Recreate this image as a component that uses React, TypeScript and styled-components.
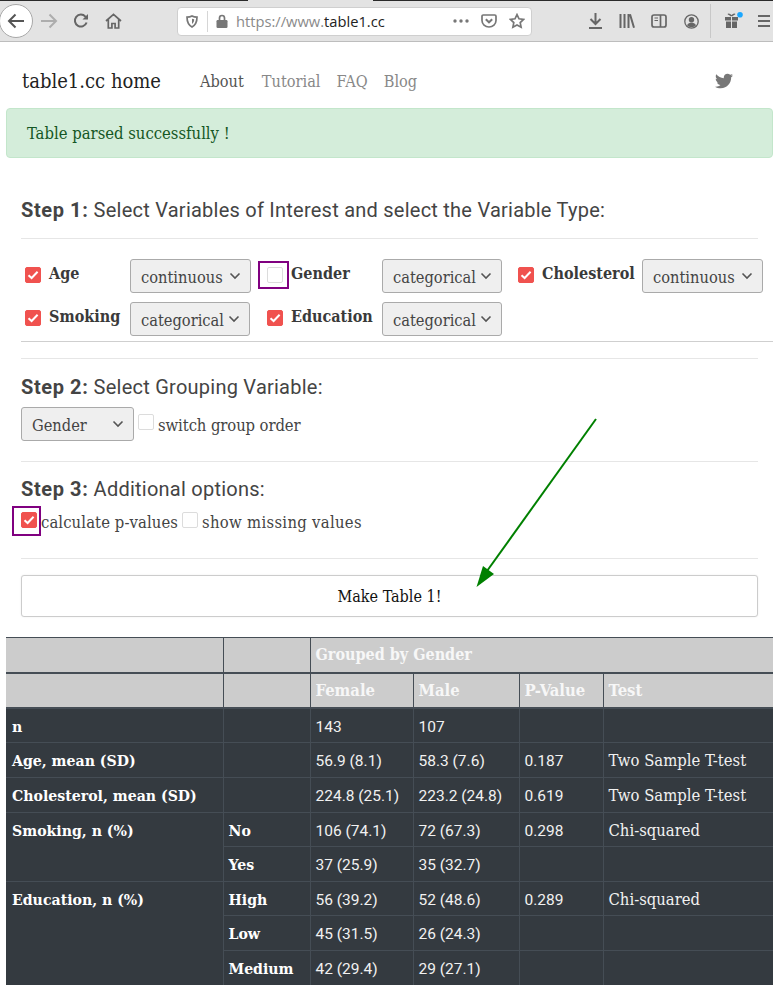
import React from "react";
import styled, { createGlobalStyle } from "styled-components";
import { FaTwitter } from "react-icons/fa";

const slab = '"DejaVu Serif Condensed", "DejaVu Serif", serif';
const heading = 'Roboto, "Open Sans", sans-serif';

const Global = createGlobalStyle`
  html, body { margin: 0; padding: 0; background: #fff; }
  * { box-sizing: border-box; }
  body { font-family: ${slab}; font-size: 16.5px; color: #444; overflow-x: hidden; }
`;

const Page = styled.div`
  position: relative;
  width: 773px;
  height: 985px;
  overflow: hidden;
`;

/* browser chrome */
const TabEdge = styled.div`
  height: 1px;
  background: linear-gradient(to right, #2a2a2a 248px, #e3e3e3 248px, #e3e3e3 373px, #2a2a2a 373px);
`;
const Toolbar = styled.div`
  display: flex;
  align-items: center;
  height: 41px;
  background: #e3e3e3;
  border-bottom: 1px solid #bdbdbd;
`;
const BackButton = styled.div`
  flex: none;
  display: flex;
  align-items: center;
  justify-content: center;
  width: 34px;
  height: 34px;
  margin-left: -1px;
  border: 1px solid #a8a8a8;
  border-radius: 50%;
  background: #fff;
`;
const Slot = styled.div<{ $dim?: boolean }>`
  flex: none;
  display: flex;
  align-items: center;
  justify-content: center;
  width: 32px;
  height: 32px;
  color: ${(p) => (p.$dim ? "#adadad" : "#666")};
`;
const UrlBar = styled.div`
  flex: none;
  display: flex;
  align-items: center;
  width: 355px;
  height: 29px;
  margin: 0 47px 0 48px;
  padding: 0 6px 0 8px;
  background: #fff;
  border: 1px solid #cfcfcf;
  border-radius: 4px;
  color: #777;
`;
const UrlDivider = styled.div`
  width: 1px;
  height: 21px;
  margin: 0 8px 0 9px;
  background: #d6d6d6;
`;
const UrlText = styled.div`
  flex: 1;
  margin-left: 8px;
  font-family: "Open Sans", sans-serif;
  font-size: 14.7px;
  color: #8a8a8a;
  white-space: nowrap;
  b {
    font-weight: 400;
    color: #222;
  }
`;
const UrlIcons = styled.div`
  display: flex;
  align-items: center;
  gap: 12px;
`;
const ToolDivider = styled.div`
  flex: none;
  width: 1px;
  height: 34px;
  margin: 0 5px 0 3px;
  background: #c8c8c8;
`;

/* site */
const Nav = styled.nav`
  display: flex;
  align-items: center;
  height: 66px;
  padding: 12px 0 0 22px;
`;
const Brand = styled.div`
  width: 178px;
  font-size: 20px;
  color: #222;
  white-space: nowrap;
`;
const NavLink = styled.a<{ $active?: boolean }>`
  margin-right: ${(p) => (p.$active ? 18 : 16)}px;
  font-size: 16.2px;
  color: ${(p) => (p.$active ? "#555" : "#888")};
  white-space: nowrap;
`;
const TwitterLink = styled.a`
  display: flex;
  margin-left: 282px;
  color: #777;
  font-size: 18px;
`;
const Alert = styled.div`
  display: flex;
  align-items: center;
  height: 50px;
  margin-left: 6px;
  padding: 1px 0 0 20px;
  background: #d4edda;
  border: 1px solid #c3e6cb;
  border-radius: 4px;
  color: #155724;
`;
const Main = styled.div`
  padding: 40px 15px 0 21px;
`;
const StepTitle = styled.h3`
  margin: 0;
  font-family: ${heading};
  font-size: 20px;
  line-height: 24px;
  font-weight: 400;
  letter-spacing: 0.24px;
  color: #444;
  white-space: nowrap;
  b {
    font-weight: 700;
    letter-spacing: 0.6px;
  }
`;
const Rule = styled.hr<{ $top: number; $bottom: number }>`
  height: 1px;
  margin: ${(p) => p.$top}px 0 ${(p) => p.$bottom}px;
  border: 0;
  background: #e6e6e6;
`;
const FullRule = styled.hr`
  width: 752px;
  height: 1px;
  margin: 5px 0 16px;
  border: 0;
  background: #cfcfcf;
`;
const Variables = styled.div`
  display: grid;
  grid-template-columns: 105px 137px 115px 136px 124px 121px;
  row-gap: 9px;
  padding-left: 4px;
`;
const Field = styled.label`
  display: flex;
  align-items: flex-start;
  gap: 8px;
  padding-top: 8px;
`;
const FieldName = styled.span`
  margin-top: -7px;
  font-size: 16px;
  font-weight: 700;
  line-height: 28px;
  color: #3a3a3a;
  white-space: nowrap;
`;
const Box = styled.span<{ $on?: boolean }>`
  position: relative;
  flex: none;
  display: flex;
  align-items: center;
  justify-content: center;
  width: 16px;
  height: 16px;
  border-radius: 2px;
  border: 1px solid ${(p) => (p.$on ? "#f0524f" : "#dcdcdc")};
  background: ${(p) => (p.$on ? "#f0524f" : "#fff")};
`;
const Mark = styled.span<{ $right: number; $bottom: number }>`
  position: absolute;
  top: -7px;
  left: -10px;
  right: ${(p) => -p.$right}px;
  bottom: ${(p) => -p.$bottom}px;
  border: 2px solid #800080;
`;
const Select = styled.select<{ $w: number }>`
  appearance: none;
  width: ${(p) => p.$w}px;
  height: 34px;
  padding: 2px 0 0 10px;
  font-family: ${slab};
  font-size: 16.3px;
  color: #444;
  border: 1px solid #aaa;
  border-radius: 3px;
  background-color: #efefef;
  background-image: url("data:image/svg+xml,%3Csvg xmlns='http://www.w3.org/2000/svg' width='12' height='8'%3E%3Cpath d='M1.5 1.5 6 6l4.5-4.5' fill='none' stroke='%23555' stroke-width='1.6'/%3E%3C/svg%3E");
  background-repeat: no-repeat;
  background-position: right 9px center;
`;
const GroupRow = styled.div`
  display: flex;
  align-items: flex-start;
  margin-top: 8px;
`;
const Inline = styled.label<{ $gap: number; $left: number; $track: number }>`
  display: flex;
  align-items: center;
  gap: ${(p) => p.$gap}px;
  height: 34px;
  margin-left: ${(p) => p.$left}px;
  color: #444;
  letter-spacing: ${(p) => p.$track}px;
  white-space: nowrap;
  ${Box} {
    margin-top: -4px;
  }
`;
const GroupInline = styled(Inline)`
  padding-top: 2px;
  ${Box} {
    margin-top: -6px;
  }
`;
const Options = styled.div`
  display: flex;
  align-items: center;
  height: 24px;
  margin-top: 9px;
  ${Inline} {
    height: 24px;
  }
`;
const MakeButton = styled.button`
  display: block;
  width: 100%;
  height: 42px;
  margin-bottom: 20px;
  background: #fff;
  border: 1px solid #ccc;
  border-radius: 3px;
  box-shadow: 0 0 2px rgba(0, 0, 0, 0.08);
  font-family: ${slab};
  font-size: 16px;
  color: #111;
`;
const Arrow = styled.svg`
  position: absolute;
  left: 470px;
  top: 415px;
`;

/* result table */
const Table = styled.table`
  width: 767px;
  margin-left: 6px;
  border-collapse: collapse;
  table-layout: fixed;
  font-size: 16.5px;
  white-space: nowrap;
`;
const Row = styled.tr<{ $h: number }>`
  height: ${(p) => p.$h}px;
`;
const Th = styled.th<{ $edge?: boolean; $small?: boolean }>`
  padding: 0 5px;
  text-align: left;
  font-size: ${(p) => (p.$small ? 16 : 16.5)}px;
  font-weight: 700;
  color: #f7f7f7;
  background: #cccccc;
  border: 1px solid #454d55;
  border-bottom-width: 2px;
  ${(p) => p.$edge && "border-left: 0;"}
`;
const Td = styled.td<{ $num?: boolean }>`
  padding: 6px 5px 3px;
  vertical-align: top;
  line-height: 24px;
  font-family: ${(p) => (p.$num ? '"Roboto", sans-serif' : "inherit")};
  font-size: ${(p) => (p.$num ? 15.5 : 16.5)}px;
  color: #f1f1f1;
  background: #343a40;
  border: 1px solid #454d55;
`;
const RowHead = styled(Td)<{ $edge?: boolean }>`
  font-size: 15.7px;
  font-weight: 700;
  color: #fff;
  ${(p) => p.$edge && "border-left: 0; padding-left: 6px;"}
`;

const stroke = { fill: "none", stroke: "currentColor", strokeWidth: 1.7 };

const Check = () => (
  <svg width="12" height="10" viewBox="0 0 12 10">
    <path d="M1.5 5.2 4.6 8l6-6.2" fill="none" stroke="#fff" strokeWidth="2" />
  </svg>
);

const Checkbox = ({ on, children }: { on?: boolean; children?: React.ReactNode }) => (
  <Box $on={on}>
    {on && <Check />}
    {children}
  </Box>
);

const kinds = ["continuous", "categorical"];
const VarSelect = ({ value, w }: { value: string; w: number }) => (
  <Select $w={w} defaultValue={value}>
    {kinds.map((k) => (
      <option key={k}>{k}</option>
    ))}
  </Select>
);

const vars = [
  { name: "Age", on: true, kind: "continuous", w: 121 },
  { name: "Gender", on: false, kind: "categorical", w: 120, marked: true },
  { name: "Cholesterol", on: true, kind: "continuous", w: 121 },
  { name: "Smoking", on: true, kind: "categorical", w: 120 },
  { name: "Education", on: true, kind: "categorical", w: 120 },
];

const Chrome = () => (
  <>
    <TabEdge />
    <Toolbar>
      <BackButton>
        <svg width="18" height="16" viewBox="0 0 18 16" color="#555" {...stroke} strokeWidth={2}>
          <path d="M17 8H2M8.5 1.5 2 8l6.5 6.5" />
        </svg>
      </BackButton>
      <Slot $dim>
        <svg width="18" height="16" viewBox="0 0 18 16" {...stroke} strokeWidth={2}>
          <path d="M1 8h15M9.5 1.5 16 8l-6.5 6.5" />
        </svg>
      </Slot>
      <Slot>
        <svg width="16" height="16" viewBox="0 0 16 16" {...stroke} strokeWidth={2}>
          <path d="M13.6 9.5A6 6 0 1 1 12.4 3.6L14.5 5.5" />
          <path d="M15 1v5.5H9.5" fill="currentColor" stroke="none" />
        </svg>
      </Slot>
      <Slot>
        <svg width="17" height="16" viewBox="0 0 17 16" {...stroke}>
          <path d="M1 8 8.5 1.3 16 8M3.3 6.5V15h3.6v-4.5h3.2V15h3.6V6.5" />
        </svg>
      </Slot>
      <UrlBar>
        <svg width="12" height="13" viewBox="0 0 12 13" {...stroke}>
          <path d="M6 1c1.700.9 3.300 1.100 5 1.100 0 4.600-1.300 8-5 9.900C2.300 10.100 1 6.700 1 2.100 2.700 2.100 4.300 1.900 6 1Z" />
          <path d="M6 3.800c.7.300 1.300.4 2.200.4 0 2-.7 3.700-2.200 4.700Z" fill="currentColor" stroke="none" />
        </svg>
        <UrlDivider />
        <svg width="12" height="14" viewBox="0 0 12 14">
          <path d="M3.500 6V4a2.500 2.500 0 0 1 5 0v2" fill="none" stroke="currentColor" strokeWidth="1.700" />
          <rect x="0.500" y="6" width="11" height="8" rx="1.200" fill="currentColor" />
        </svg>
        <UrlText>
          https://www.<b>table1.cc</b>
        </UrlText>
        <UrlIcons>
          <svg width="16" height="4" viewBox="0 0 16 4" fill="currentColor">
            <circle cx="2" cy="2" r="1.700" />
            <circle cx="8" cy="2" r="1.700" />
            <circle cx="14" cy="2" r="1.700" />
          </svg>
          <svg width="16" height="14" viewBox="0 0 16 14" {...stroke}>
            <path d="M1 2.200C1 1.500 1.500 1 2.200 1h11.600c.7 0 1.200.5 1.200 1.200V6.500a7 6.500 0 0 1-14 0Z" />
            <path d="m4.800 5.300 3.200 3 3.200-3" strokeWidth="2" />
          </svg>
          <svg width="16" height="16" viewBox="0 0 16 16" {...stroke}>
            <path d="m8 1.600 2 4.200 4.600.6-3.400 3.200.9 4.600L8 11.900l-4.100 2.300.9-4.600L1.400 6.400 6 5.800Z" />
          </svg>
        </UrlIcons>
      </UrlBar>
      <Slot>
        <svg width="13" height="16" viewBox="0 0 13 16" {...stroke} strokeWidth={2}>
          <path d="M6.500 0v10.500M1.500 6l5 5 5-5M0 15h13" />
        </svg>
      </Slot>
      <Slot>
        <svg width="16" height="14" viewBox="0 0 16 14" {...stroke} strokeWidth={2}>
          <path d="M1.500 0v14M5.500 0v14M9.500 0v14M11 .3 15 13.700" />
        </svg>
      </Slot>
      <Slot>
        <svg width="16" height="14" viewBox="0 0 16 14" {...stroke}>
          <rect x="1" y="1" width="14" height="12" rx="2" />
          <path d="M9.500 1v12" />
          <path d="M3.500 4H7M3.500 6.500H7" strokeWidth="1.200" />
        </svg>
      </Slot>
      <Slot>
        <svg width="15" height="15" viewBox="0 0 15 15" {...stroke} strokeWidth={1.300}>
          <circle cx="7.500" cy="7.500" r="6.700" />
          <circle cx="7.500" cy="5.800" r="2.700" fill="currentColor" stroke="none" />
          <path d="M3 11.200c1-2 2.700-2.500 4.500-2.500s3.500.5 4.500 2.500c-1 1.300-2.600 2-4.500 2s-3.500-.7-4.500-2Z" fill="currentColor" stroke="none" />
        </svg>
      </Slot>
      <ToolDivider />
      <Slot>
        <svg width="22" height="18" viewBox="0 0 22 18">
          <g transform="translate(3 -1)">
            <path d="M1 6h6v3.500H1ZM8 6h6v3.500H8ZM2 10.500h5V17H2ZM8 10.500h5V17H8Z" fill="currentColor" />
            <path d="M7.500 5C6 3.500 4.500 3 4 3.500M7.500 5C9 3.500 10.500 3 11 3.500" fill="none" stroke="currentColor" strokeWidth="1.600" />
          </g>
          <circle cx="19" cy="2.800" r="2.800" fill="#1aa7ff" />
        </svg>
      </Slot>
      <Slot>
        <svg width="12" height="12" viewBox="0 0 12 12" fill="currentColor">
          <path d="M0 0h12v2H0ZM0 5h12v2H0ZM0 10h12v2H0Z" />
        </svg>
      </Slot>
    </Toolbar>
  </>
);

export default function App() {
  return (
    <Page>
      <Global />
      <Chrome />
      <Nav>
        <Brand>table1.cc home</Brand>
        <NavLink $active>About</NavLink>
        <NavLink>Tutorial</NavLink>
        <NavLink>FAQ</NavLink>
        <NavLink>Blog</NavLink>
        <TwitterLink>
          <FaTwitter />
        </TwitterLink>
      </Nav>
      <Alert>Table parsed successfully !</Alert>
      <Main>
        <StepTitle>
          <b>Step 1:</b> Select Variables of Interest and select the Variable Type:
        </StepTitle>
        <Rule $top={16} $bottom={20} />
        <Variables>
          {vars.map((v) => (
            <React.Fragment key={v.name}>
              <Field>
                <Checkbox on={v.on}>
                  {v.marked && <Mark $right={7} $bottom={7} />}
                </Checkbox>
                <FieldName>{v.name}</FieldName>
              </Field>
              <VarSelect value={v.kind} w={v.w} />
            </React.Fragment>
          ))}
        </Variables>
        <FullRule />
        <Rule $top={0} $bottom={16} />
        <StepTitle>
          <b>Step 2:</b> Select Grouping Variable:
        </StepTitle>
        <GroupRow>
          <Select $w={113} defaultValue="Gender">
            <option>Gender</option>
            <option>Smoking</option>
          </Select>
          <GroupInline $gap={4} $left={4} $track={-0.1}>
            <Checkbox />
            switch group order
          </GroupInline>
        </GroupRow>
        <Rule $top={20} $bottom={15} />
        <StepTitle>
          <b>Step 3:</b> Additional options:
        </StepTitle>
        <Options>
          <Inline $gap={4} $left={0} $track={0.1}>
            <Checkbox on>
              <Mark $right={5} $bottom={9} />
            </Checkbox>
            calculate p-values
          </Inline>
          <Inline $gap={4} $left={4} $track={0.3}>
            <Checkbox />
            show missing values
          </Inline>
        </Options>
        <Rule $top={24} $bottom={16} />
        <MakeButton>Make Table 1!</MakeButton>
      </Main>
      <Arrow width="130" height="175" viewBox="470 415 130 175">
        <path d="M596 419 487 571" fill="none" stroke="#008000" strokeWidth="2" />
        <path d="M476.500 587 483 566 494 574Z" fill="#008000" />
      </Arrow>
      <Table>
        <colgroup>
          <col style={{ width: 217 }} />
          <col style={{ width: 87 }} />
          <col style={{ width: 103 }} />
          <col style={{ width: 106 }} />
          <col style={{ width: 84 }} />
          <col style={{ width: 170 }} />
        </colgroup>
        <thead>
          <Row $h={35}>
            <Th $edge />
            <Th />
            <Th $small colSpan={4}>
              Grouped by Gender
            </Th>
          </Row>
          <Row $h={35}>
            <Th $edge />
            <Th />
            <Th>Female</Th>
            <Th>Male</Th>
            <Th>P-Value</Th>
            <Th>Test</Th>
          </Row>
        </thead>
        <tbody>
          <Row $h={35}>
            <RowHead $edge>n</RowHead>
            <Td />
            <Td $num>143</Td>
            <Td $num>107</Td>
            <Td />
            <Td />
          </Row>
          <Row $h={35}>
            <RowHead $edge>Age, mean (SD)</RowHead>
            <Td />
            <Td $num>56.9 (8.1)</Td>
            <Td $num>58.3 (7.6)</Td>
            <Td $num>0.187</Td>
            <Td>Two Sample T-test</Td>
          </Row>
          <Row $h={35}>
            <RowHead $edge>Cholesterol, mean (SD)</RowHead>
            <Td />
            <Td $num>224.8 (25.1)</Td>
            <Td $num>223.2 (24.8)</Td>
            <Td $num>0.619</Td>
            <Td>Two Sample T-test</Td>
          </Row>
          <Row $h={34}>
            <RowHead $edge rowSpan={2}>
              Smoking, n (%)
            </RowHead>
            <RowHead>No</RowHead>
            <Td $num>106 (74.1)</Td>
            <Td $num>72 (67.3)</Td>
            <Td $num>0.298</Td>
            <Td>Chi-squared</Td>
          </Row>
          <Row $h={35}>
            <RowHead>Yes</RowHead>
            <Td $num>37 (25.9)</Td>
            <Td $num>35 (32.7)</Td>
            <Td />
            <Td />
          </Row>
          <Row $h={34}>
            <RowHead $edge rowSpan={3}>
              Education, n (%)
            </RowHead>
            <RowHead>High</RowHead>
            <Td $num>56 (39.2)</Td>
            <Td $num>52 (48.6)</Td>
            <Td $num>0.289</Td>
            <Td>Chi-squared</Td>
          </Row>
          <Row $h={35}>
            <RowHead>Low</RowHead>
            <Td $num>45 (31.5)</Td>
            <Td $num>26 (24.3)</Td>
            <Td />
            <Td />
          </Row>
          <Row $h={35}>
            <RowHead>Medium</RowHead>
            <Td $num>42 (29.4)</Td>
            <Td $num>29 (27.1)</Td>
            <Td />
            <Td />
          </Row>
        </tbody>
      </Table>
    </Page>
  );
}
